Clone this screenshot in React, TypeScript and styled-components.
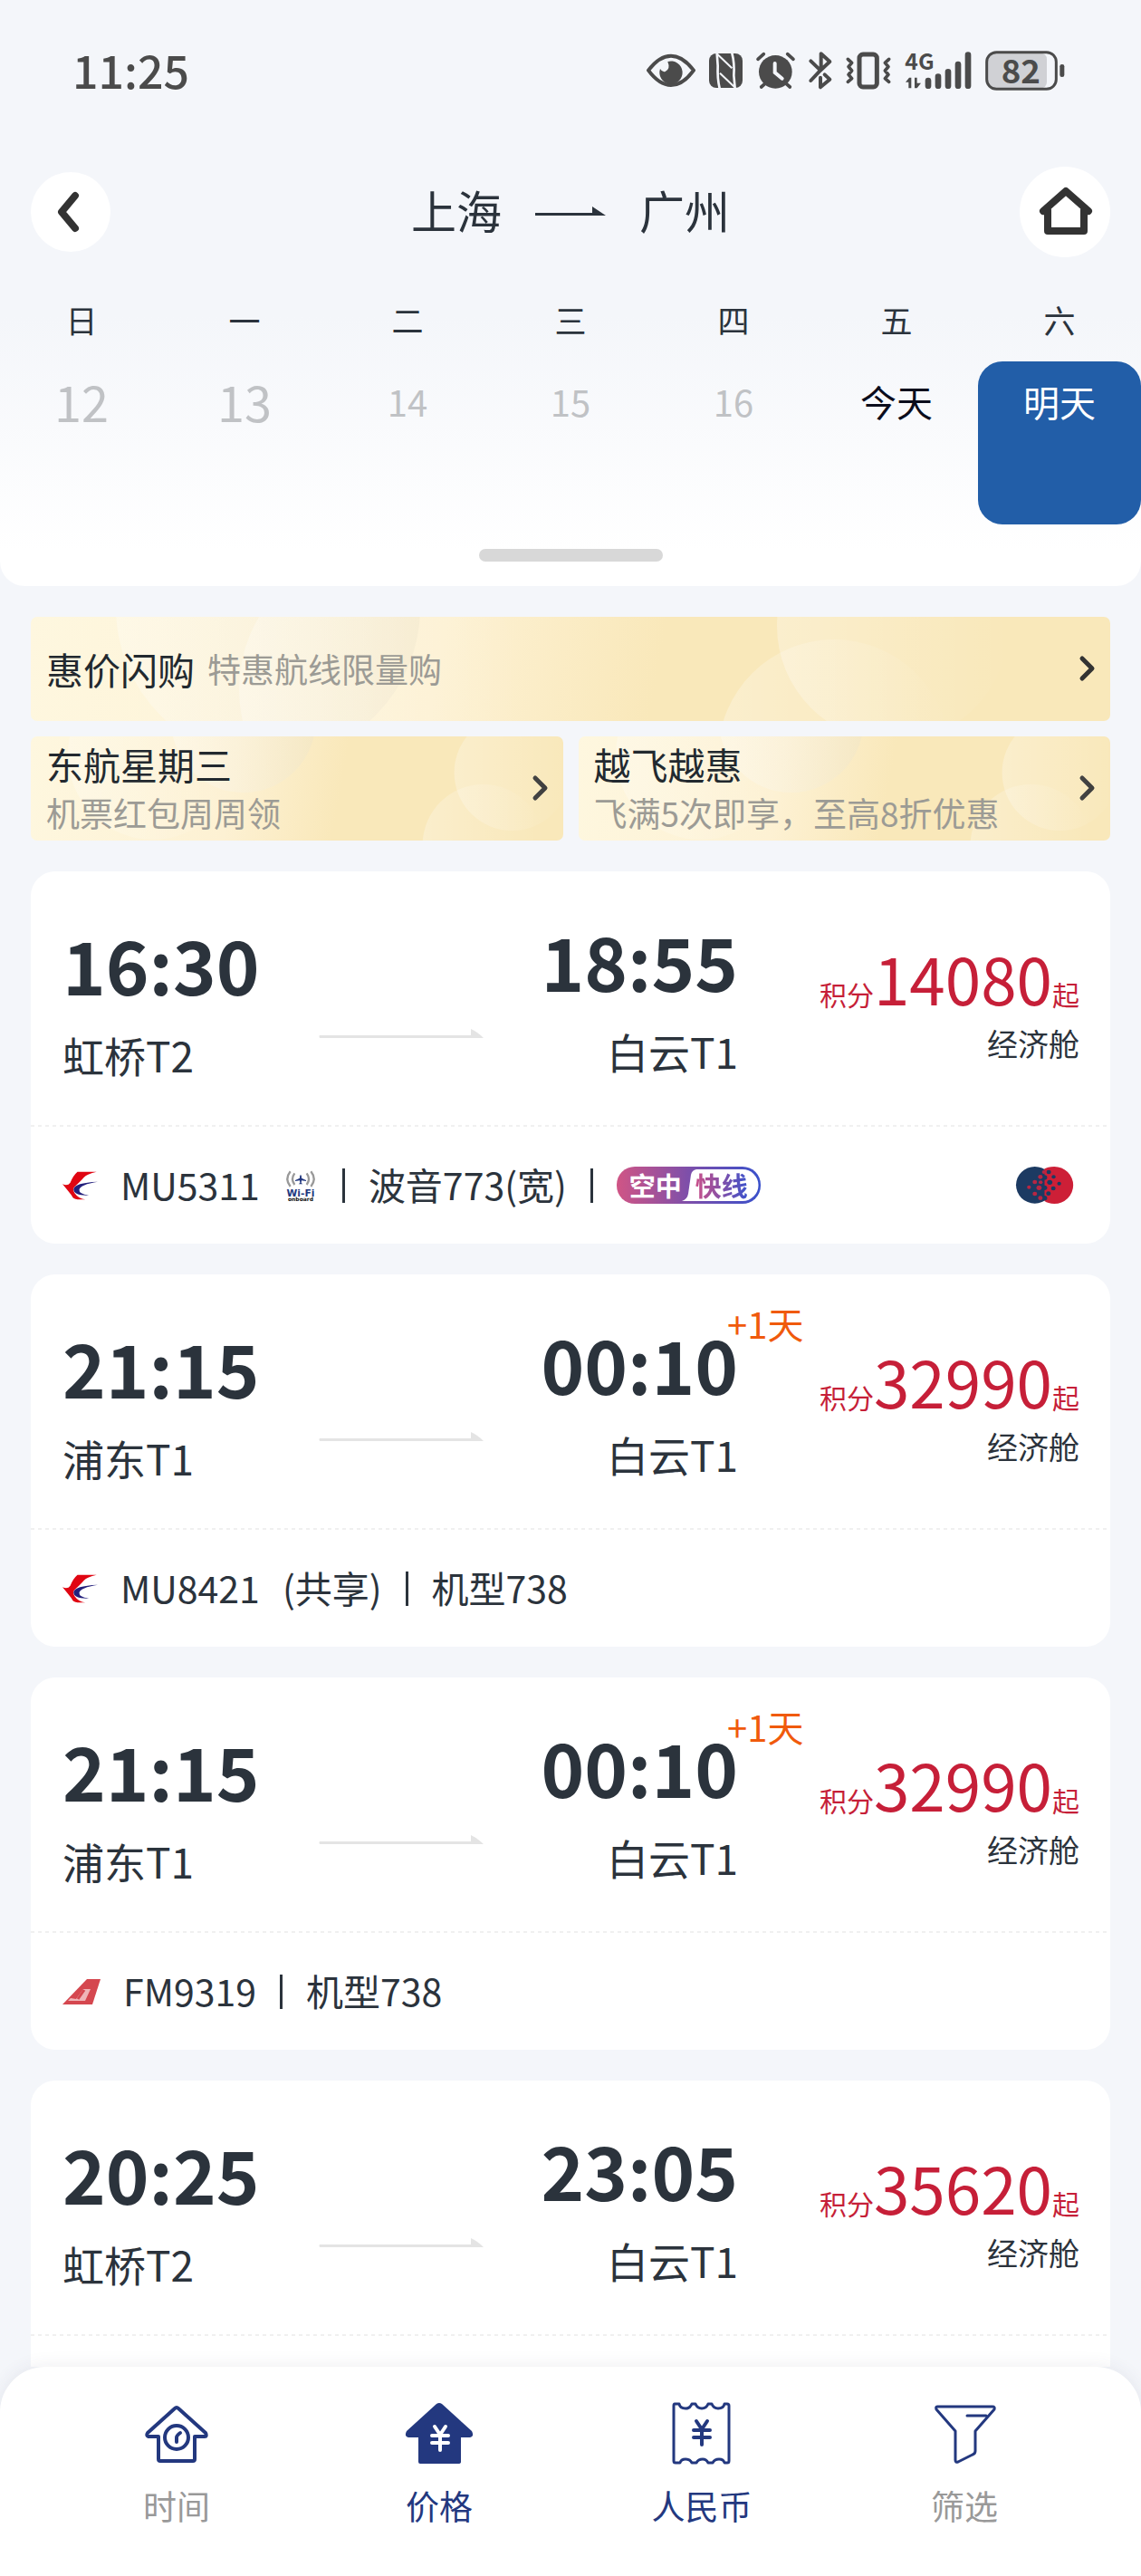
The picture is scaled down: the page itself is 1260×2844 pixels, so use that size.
import React from "react";
import styled, { createGlobalStyle } from "styled-components";

const ink = "#2b333c";
const navy = "#23387f";
const statusInk = "#4b4b4b";
const fontStack = '"Noto Sans CJK SC", "Noto Sans", sans-serif';

const GlobalStyle = createGlobalStyle`
  *, *::before, *::after { box-sizing: border-box; }
  body { margin: 0; background: #f4f6fa; font-family: ${fontStack}; color: ${ink}; }
  button { font: inherit; color: inherit; border: 0; padding: 0; margin: 0; background: none; cursor: pointer; }
  h1, p { margin: 0; font-weight: 400; }
  svg { display: block; flex: none; overflow: visible; }
`;

const Screen = styled.div`
  height: 100vh;
  display: flex;
  flex-direction: column;
  background: #f4f6fa;
  overflow: hidden;
`;

/* ---------- header ---------- */

const Header = styled.header`
  flex: none;
  border-radius: 0 0 27px 27px;
  background: linear-gradient(to bottom, #f4f6fa 0, #f4f6fa 54%, #ffffff 94%);
  padding-bottom: 27px;
`;

const StatusBar = styled.div`
  height: 158px;
  padding: 0 84px 2px 80px;
  display: flex;
  align-items: center;
  justify-content: space-between;
  color: ${statusInk};
`;

const Clock = styled.time`
  padding-bottom: 4px;
  font-size: 50px;
  line-height: 60px;
  font-weight: 500;
`;

const StatusIcons = styled.div`
  display: flex;
  align-items: center;
  gap: 15px;
`;

const TitleBar = styled.div`
  height: 152px;
  padding: 0 34px;
  display: grid;
  grid-template-columns: 1fr auto 1fr;
  align-items: center;
`;

const RoundButton = styled.button<{ $size: number; $end?: boolean }>`
  width: ${(p) => p.$size}px;
  height: ${(p) => p.$size}px;
  border-radius: 50%;
  background: #fff;
  display: flex;
  align-items: center;
  justify-content: center;
  justify-self: ${(p) => (p.$end ? "end" : "start")};
`;

const Route = styled.h1`
  display: flex;
  align-items: center;
  gap: 37px;
  font-size: 50px;
  line-height: 60px;
`;

const City = styled.span`
  padding-bottom: 6px;
`;

const Week = styled.div`
  display: grid;
  grid-template-columns: repeat(7, 1fr);
`;

const Weekday = styled.div`
  height: 89px;
  line-height: 85px;
  text-align: center;
  font-size: 35px;
`;

type DayTone = "past" | "today" | "selected";
const dayColors: Record<DayTone, string> = {
  past: "#c0c2c5",
  today: "#0b0d1c",
  selected: "#ffffff",
};

const Day = styled.button<{ $tone: DayTone; $size: number }>`
  && {
    height: 180px;
    padding-top: 14px;
    display: flex;
    justify-content: center;
    align-items: flex-start;
    border-radius: 27px;
    font-size: ${(p) => p.$size}px;
    line-height: 60px;
    color: ${(p) => dayColors[p.$tone]};
    background: ${(p) => (p.$tone === "selected" ? "#225ea8" : "transparent")};
  }
`;

const Handle = styled.button`
  && {
    display: block;
    width: 203px;
    height: 14px;
    margin: 27px auto 0;
    border-radius: 7px;
    background: #d8d8d8;
  }
`;

/* ---------- list ---------- */

const List = styled.main`
  flex: 1;
  min-height: 0;
  overflow: hidden;
  padding: 34px 34px 0;
  display: flex;
  flex-direction: column;
  gap: 34px;
`;

const Promos = styled.section`
  flex: none;
  display: grid;
  grid-template-columns: 1fr 1fr;
  gap: 17px;
`;

const Promo = styled.a<{ $wide?: boolean }>`
  grid-column: ${(p) => (p.$wide ? "1 / -1" : "auto")};
  height: 115px;
  padding: 0 15px 1px 17px;
  border-radius: 7px;
  overflow: hidden;
  position: relative;
  display: flex;
  align-items: center;
  justify-content: space-between;
  text-decoration: none;
  color: #22292f;
  background: linear-gradient(100deg, #fef7df 0%, #fdf1d3 38%, #f9e8ba 58%, #f9e8ba 100%);
`;

const Bubbles = styled.svg`
  position: absolute;
  inset: 0;
  width: 100%;
  height: 100%;
`;

const PromoText = styled.span<{ $wide?: boolean }>`
  position: relative;
  display: flex;
  flex-direction: ${(p) => (p.$wide ? "row" : "column")};
  align-items: ${(p) => (p.$wide ? "center" : "flex-start")};
  column-gap: 14px;
  line-height: 54px;
`;

const PromoTitle = styled.span`
  font-size: 41px;
`;

const PromoNote = styled.span`
  font-size: 37px;
  color: #9c9b95;
`;

const Card = styled.article`
  flex: none;
  min-height: 411px;
  border-radius: 27px;
  background: #fff;
`;

const CardMain = styled.div`
  position: relative;
  height: 282px;
  padding: 0 34px 0 35px;
  display: grid;
  grid-template-columns: 283fr 182fr 281fr 377fr;
`;

const Rule = styled.svg`
  position: absolute;
  left: 0;
  bottom: 0;
  width: 100%;
  height: 2px;
`;

const Stop = styled.div<{ $arrive?: boolean }>`
  position: relative;
  padding-top: ${(p) => (p.$arrive ? 48 : 52)}px;
  text-align: ${(p) => (p.$arrive ? "right" : "left")};
  line-height: 100px;
  white-space: nowrap;
`;

const StopTime = styled.time`
  display: block;
  font-size: 81px;
  font-weight: 700;
`;

const StopPlace = styled.span`
  display: block;
  font-size: 46px;
`;

const NextDay = styled.span`
  position: absolute;
  top: 30px;
  left: calc(100% - 12px);
  font-size: 40px;
  line-height: 48px;
  color: #f05a0c;
`;

const ArrowCell = styled.div`
  padding-top: 174px;
`;

const Price = styled.div`
  padding-top: 71px;
  text-align: right;
  white-space: nowrap;
`;

const PriceLine = styled.p`
  height: 93px;
  color: #c61f38;
  font-size: 30px;
  line-height: 92px;
`;

const Points = styled.span`
  font-size: 71px;
`;

const Cabin = styled.p`
  font-size: 34px;
  line-height: 52px;
`;

const CardFoot = styled.div`
  height: 129px;
  padding: 0 41px 0 35px;
  display: flex;
  align-items: center;
  justify-content: space-between;
`;

const FlightInfo = styled.div`
  display: flex;
  align-items: center;
  gap: 25px;
  font-size: 41px;
  line-height: 60px;
  white-space: nowrap;
`;

const InfoText = styled.span`
  padding-bottom: 4px;
`;

const Onboard = styled.span`
  margin: 0 4px;
`;

const Bar = styled.span`
  width: 3px;
  height: 38px;
  margin: 0 1px;
  background: ${ink};
`;

const Express = styled.span`
  position: relative;
  width: 159px;
  height: 41px;
  padding: 0 14px;
  display: flex;
  align-items: center;
  justify-content: space-between;
  font-size: 29px;
  line-height: 39px;
  font-weight: 700;
  color: #fff;
`;

const ExpressBack = styled.svg`
  position: absolute;
  inset: 0;
`;

const ExpressWord = styled.span<{ $tinted?: boolean }>`
  position: relative;
  color: ${(p) => (p.$tinted ? "transparent" : "#fff")};
  background: ${(p) => (p.$tinted ? "linear-gradient(90deg, #c9508a, #8350a8 50%, #3b52cc)" : "none")};
  background-clip: ${(p) => (p.$tinted ? "text" : "border-box")};
`;

/* ---------- bottom bar ---------- */

const TabBar = styled.nav`
  flex: none;
  position: relative;
  height: 231px;
  padding: 37px 50px 0;
  border-radius: 50px 50px 0 0;
  background: #fff;
  box-shadow: 0 0 20px rgba(60, 60, 90, 0.09);
  display: grid;
  grid-template-columns: repeat(4, 1fr);
`;

const Tab = styled.button<{ $active?: boolean }>`
  && {
    display: flex;
    flex-direction: column;
    align-items: center;
    justify-content: flex-start;
    gap: 12px;
    font-size: 37px;
    line-height: 60px;
    color: ${(p) => (p.$active ? navy : "#999999")};
  }
`;

/* ---------- drawings ---------- */

const EyeIcon = () => (
  <svg width="54" height="44" viewBox="36 48 162 132" fill={statusInk}>
    <path d="M42 113Q78 65 117 65Q156 65 192 113Q156 162 117 162Q78 162 42 113Z" fill="none" stroke={statusInk} strokeWidth="12" strokeLinejoin="round" />
    <path d="M106 84A38 38 0 1 1 81 108Q88 120 98 117Q116 108 106 84Z" />
  </svg>
);

const NfcIcon = () => (
  <svg width="37" height="44" viewBox="246 48 111 132">
    <rect x="246" y="57" width="111" height="114" rx="24" fill={statusInk} />
    <g fill="none" stroke="#f4f6fa" strokeWidth="8">
      <path d="M281 172Q273 140 275 98L272 56M322 56Q331 90 328 130L332 172" />
      <path d="M274 60L322 106M282 122L330 168" strokeWidth="6" />
    </g>
  </svg>
);

const AlarmIcon = () => (
  <svg width="43" height="44" viewBox="405 48 129 132" fill="none" stroke={statusInk} strokeWidth="11" strokeLinecap="round">
    <circle cx="469" cy="118" r="55" fill={statusInk} stroke="none" />
    <path d="M411 76L430 59M528 76L509 59M422 168L438 154M517 168L501 154" />
    <path d="M467 90V120L491 140" stroke="#f4f6fa" strokeWidth="12" />
  </svg>
);

const BluetoothIcon = () => (
  <svg width="26" height="44" viewBox="581 48 78 132" fill="none" stroke={statusInk} strokeWidth="12" strokeLinejoin="round" strokeLinecap="round">
    <path d="M588 82L620 113L651 84L622 58V108M588 147L620 113M634 127L651 143L620 169V137" />
  </svg>
);

const VibrateIcon = () => (
  <svg width="50" height="44" viewBox="704 48 150 132" fill="none" stroke={statusInk} strokeLinejoin="round" strokeLinecap="round">
    <rect x="749" y="60" width="58" height="108" rx="12" strokeWidth="15" />
    <path d="M711 76L724 88L713 101L724 114L713 127L724 140L711 151M847 76L834 88L845 101L834 114L845 127L834 140L847 151" strokeWidth="11" />
  </svg>
);

const SignalIcon = () => (
  <svg width="74" height="44" viewBox="899 48 222 132" fill={statusInk}>
    <text x="900" y="111" fontFamily={fontStack} fontSize="74" fontWeight="700">4G</text>
    <path d="M902 152L914 137H921V172H912V152ZM932 137H940V155H953L940 172H932Z" />
    <g stroke={statusInk} strokeWidth="20" strokeLinecap="round">
      <path d="M977 147V164M1010 134V164M1043 118V164M1076 93V164M1109 62V164" />
    </g>
  </svg>
);

const BatteryIcon = () => (
  <svg width="88" height="44" viewBox="1166 48 264 132" fill={statusInk}>
    <rect x="1174" y="56" width="196" height="116" rx="20" fill="#d0d1d5" />
    <rect x="1171" y="53" width="230" height="122" rx="32" fill="none" stroke={statusInk} strokeWidth="9" />
    <rect x="1413" y="93" width="15" height="42" rx="7" />
    <text x="1284" y="156" textAnchor="middle" fontFamily={fontStack} fontSize="110" fontWeight="700">82</text>
  </svg>
);

const BackIcon = () => (
  <svg width="32" height="48" viewBox="0 0 32 48" fill="none" stroke="#333" strokeWidth="8" strokeLinecap="round" strokeLinejoin="round">
    <path d="M21 6L6 24L21 42" />
  </svg>
);

const HomeIcon = () => (
  <svg width="60" height="56" viewBox="0 0 60 56" fill="none" stroke="#333" strokeWidth="8" strokeLinecap="round" strokeLinejoin="round">
    <path d="M6 27L31 5L56 27M11 26V49H51V26" />
  </svg>
);

const RouteArrow = () => (
  <svg width="78" height="12" viewBox="0 0 78 12" fill={ink}>
    <path d="M0 7H63V0L78 10H0Z" />
  </svg>
);

const LegArrow = () => (
  <svg width="182" height="11" viewBox="0 0 182 11" fill="#e4e4e4">
    <path d="M1 7H168V0Q175 3 182 10H1Q0 8 1 7Z" />
  </svg>
);

const Chevron = () => (
  <svg width="19" height="28" viewBox="0 0 19 28" fill="none" stroke="#333" strokeWidth="5" strokeLinecap="round" strokeLinejoin="round">
    <path d="M3 3L14 14L3 25" />
  </svg>
);

const EasternLogo = () => (
  <svg width="39" height="32" viewBox="0 0 118 96">
    <path d="M50 2H114Q82 10 72 20Q62 32 42 50Q32 58 40 72Q54 92 76 94H50Q36 94 30 80Q16 62 0 43Q18 50 26 38Q36 14 50 2Z" fill="#e00512" />
    <path d="M118 35Q40 38 37 60Q38 82 88 80Q54 76 56 61Q60 44 118 35Z" fill="#23207c" />
  </svg>
);

const ShanghaiLogo = () => (
  <svg width="42" height="30" viewBox="0 0 42 30">
    <path d="M27 1H42L33 29H0Z" fill="#d5474f" />
    <path d="M23 12H31L25 25H6L9 22L15 23Z" fill="#efb5b8" />
    <path d="M24 13L17 23" stroke="#d5474f" strokeWidth="3" />
  </svg>
);

const WifiIcon = () => (
  <svg width="32" height="34" viewBox="0 0 96 102">
    <g fill="none" stroke="#999" strokeWidth="7">
      <path d="M14 4Q-6 29 14 54M28 10Q14 29 28 48M82 4Q102 29 82 54M68 10Q82 29 68 48" />
    </g>
    <path d="M48 14Q52 18 51 26L66 33V36L51 34L50 42L55 46H41L46 42L45 34L30 36V33L45 26Q44 18 48 14Z" fill="#23387f" />
    <text x="48" y="88" textAnchor="middle" fontFamily='"DejaVu Sans", sans-serif' fontSize="32" fontWeight="700" fill="#23387f">Wi-Fi</text>
    <text x="48" y="101" textAnchor="middle" fontFamily='"DejaVu Sans", sans-serif' fontSize="18" fontWeight="700" fill="#111">onboard</text>
  </svg>
);

const blueDots = [[101, 18, 7], [116, 34, 6], [104, 52, 8], [133, 56, 6], [115, 72, 7], [100, 89, 7], [88, 36, 8], [88, 70, 8], [88, 104, 8]];
const redDots = [[75, 34, 7], [58, 51, 7], [40, 68, 6], [71, 70, 8], [58, 90, 7], [75, 104, 7], [76, 52, 6], [86, 18, 6]];

const AllianceIcon = () => (
  <svg width="63" height="41" viewBox="0 0 176 123" preserveAspectRatio="none">
    <ellipse cx="58" cy="61" rx="58" ry="61" fill="#1c3a62" />
    <path d="M84 10Q98 0 118 0A58 61 0 0 1 118 123Q98 122 88 114V10Z" fill="#cd1f37" />
    {blueDots.map(([x, y, r]) => <circle key={`${x}-${y}`} cx={x} cy={y} r={r} fill="#1c3a62" />)}
    {redDots.map(([x, y, r]) => <circle key={`${x}-${y}`} cx={x} cy={y} r={r} fill="#b72643" />)}
  </svg>
);

const YenStroke = ({ color }: { color: string }) => (
  <path d="M-6 -12L0 -3L6 -12M0 -3V14M-9 -2H9M-9 6H9" fill="none" stroke={color} strokeWidth="4" strokeLinecap="round" strokeLinejoin="round" />
);

const TimeTabIcon = () => (
  <svg width="76" height="74" viewBox="0 0 76 74" fill="none" stroke={navy} strokeWidth="4" strokeLinejoin="round" strokeLinecap="round">
    <path d="M36 9Q38 7 40 9L70 36Q72 40 69 40H58V65Q58 67 56 67H20Q18 67 18 65V40H7Q4 39 6 36Z" />
    <circle cx="38" cy="41" r="13" />
    <path d="M38 46V41Q38 39 42 36" />
  </svg>
);

const PriceTabIcon = () => (
  <svg width="76" height="74" viewBox="0 0 76 74">
    <path d="M35 4Q38 2 41 4L74 34Q77 40 72 41H62V68Q62 70 59 70H17Q15 70 15 68V41H4Q-1 40 2 34Z" fill={navy} />
    <g transform="translate(39 41)"><YenStroke color="#fff" /></g>
  </svg>
);

const CurrencyTabIcon = () => (
  <svg width="76" height="74" viewBox="0 0 76 74" fill="none" stroke={navy} strokeWidth="3" strokeLinejoin="round">
    <path d="M8 4H13Q14 9 20 9Q25 9 27 4H31Q33 9 38 9Q43 9 45 4H49Q51 9 56 9Q62 9 63 4H66Q68 4 68 6V67Q68 69 66 69H63Q62 65 57 65Q52 65 50 69H45Q43 65 39 65Q34 65 32 69H27Q25 65 20 65Q15 65 14 69H9Q7 69 7 67V6Q7 4 8 4Z" />
    <g transform="translate(38 35)"><YenStroke color={navy} /></g>
  </svg>
);

const FilterTabIcon = () => (
  <svg width="76" height="74" viewBox="0 0 76 74" fill="none" stroke={navy} strokeWidth="3" strokeLinejoin="round" strokeLinecap="round">
    <path d="M8 7H69Q72 7 71 10L50 34V56Q50 59 47 60L31 68Q28 69 28 66V34L7 10Q6 7 8 7ZM41 17H62" />
  </svg>
);

/* ---------- parts ---------- */

const weekdays = ["日", "一", "二", "三", "四", "五", "六"];
const days: { label: string; tone: DayTone; size: number }[] = [
  { label: "12", tone: "past", size: 54 },
  { label: "13", tone: "past", size: 54 },
  { label: "14", tone: "past", size: 40 },
  { label: "15", tone: "past", size: 40 },
  { label: "16", tone: "past", size: 40 },
  { label: "今天", tone: "today", size: 40 },
  { label: "明天", tone: "selected", size: 40 },
];

const PromoLink = ({ title, note, wide }: { title: string; note: string; wide?: boolean }) => (
  <Promo href="#" $wide={wide}>
    {wide ? (
      <Bubbles viewBox="0 0 1192 115" preserveAspectRatio="none">
        <defs>
          <linearGradient id="wideA"><stop offset="0" stopColor="#fff" stopOpacity="0.4" /><stop offset="1" stopColor="#eee4c8" stopOpacity="0.7" /></linearGradient>
          <linearGradient id="wideB"><stop offset="0" stopColor="#fff" stopOpacity="0.28" /><stop offset="1" stopColor="#fff" stopOpacity="0" /></linearGradient>
        </defs>
        <circle cx="262" cy="-10" r="168" fill="url(#wideA)" opacity="0.7" />
        <circle cx="386" cy="80" r="156" fill="url(#wideB)" />
        <circle cx="952" cy="10" r="128" fill="url(#wideB)" />
        <circle cx="887" cy="153" r="128" fill="url(#wideB)" />
      </Bubbles>
    ) : (
      <Bubbles viewBox="0 0 588 115" preserveAspectRatio="none">
        <defs>
          <linearGradient id="halfA"><stop offset="0" stopColor="#fff" stopOpacity="0.4" /><stop offset="1" stopColor="#eee4c8" stopOpacity="0.6" /></linearGradient>
          <linearGradient id="halfB"><stop offset="0" stopColor="#fff" stopOpacity="0.26" /><stop offset="1" stopColor="#fff" stopOpacity="0" /></linearGradient>
        </defs>
        <circle cx="135" cy="20" r="94" fill="url(#halfB)" />
        <circle cx="235" cy="-18" r="80" fill="url(#halfA)" opacity="0.7" />
        <circle cx="532" cy="40" r="64" fill="url(#halfB)" />
        <circle cx="500" cy="120" r="67" fill="url(#halfB)" />
      </Bubbles>
    )}
    <PromoText $wide={wide}>
      <PromoTitle>{title}</PromoTitle>
      <PromoNote>{note}</PromoNote>
    </PromoText>
    <Chevron />
  </Promo>
);

const ExpressBadge = () => (
  <Express>
    <ExpressBack width="159" height="41" viewBox="0 0 159 41">
      <defs>
        <linearGradient id="express"><stop offset="0" stopColor="#d05585" /><stop offset="0.5" stopColor="#7d4faa" /><stop offset="1" stopColor="#3950cb" /></linearGradient>
      </defs>
      <rect width="159" height="41" rx="20" fill="url(#express)" />
      <path d="M88 3H139A17 17 0 0 1 139 38H72Q78 36 79 30L82 9Q83 4 88 3Z" fill="#fff" />
    </ExpressBack>
    <ExpressWord>空中</ExpressWord>
    <ExpressWord $tinted>快线</ExpressWord>
  </Express>
);

type Flight = {
  depart: string;
  from: string;
  arrive: string;
  to: string;
  nextDay?: boolean;
  points: string;
  foot?: React.ReactNode;
};

const flights: Flight[] = [
  {
    depart: "16:30", from: "虹桥T2", arrive: "18:55", to: "白云T1", points: "14080",
    foot: (
      <>
        <FlightInfo>
          <EasternLogo />
          <InfoText>MU5311</InfoText>
          <Onboard><WifiIcon /></Onboard>
          <Bar />
          <InfoText>波音773(宽)</InfoText>
          <Bar />
          <ExpressBadge />
        </FlightInfo>
        <AllianceIcon />
      </>
    ),
  },
  {
    depart: "21:15", from: "浦东T1", arrive: "00:10", to: "白云T1", nextDay: true, points: "32990",
    foot: (
      <FlightInfo>
        <EasternLogo />
        <InfoText>MU8421</InfoText>
        <InfoText>(共享)</InfoText>
        <Bar />
        <InfoText>机型738</InfoText>
      </FlightInfo>
    ),
  },
  {
    depart: "21:15", from: "浦东T1", arrive: "00:10", to: "白云T1", nextDay: true, points: "32990",
    foot: (
      <FlightInfo>
        <ShanghaiLogo />
        <InfoText>FM9319</InfoText>
        <Bar />
        <InfoText>机型738</InfoText>
      </FlightInfo>
    ),
  },
  { depart: "20:25", from: "虹桥T2", arrive: "23:05", to: "白云T1", points: "35620" },
];

const FlightCard = ({ flight }: { flight: Flight }) => (
  <Card>
    <CardMain>
      <Stop>
        <StopTime>{flight.depart}</StopTime>
        <StopPlace>{flight.from}</StopPlace>
      </Stop>
      <ArrowCell><LegArrow /></ArrowCell>
      <Stop $arrive>
        <StopTime>{flight.arrive}</StopTime>
        <StopPlace>{flight.to}</StopPlace>
        {flight.nextDay && <NextDay>+1天</NextDay>}
      </Stop>
      <Price>
        <PriceLine>积分<Points>{flight.points}</Points>起</PriceLine>
        <Cabin>经济舱</Cabin>
      </Price>
      <Rule><line x1="0" y1="1" x2="100%" y2="1" stroke="#f0f0f0" strokeWidth="2" strokeDasharray="4 4" /></Rule>
    </CardMain>
    {flight.foot && <CardFoot>{flight.foot}</CardFoot>}
  </Card>
);

export default function App() {
  return (
    <Screen>
      <GlobalStyle />
      <Header>
        <StatusBar>
          <Clock>11:25</Clock>
          <StatusIcons>
            <EyeIcon />
            <NfcIcon />
            <AlarmIcon />
            <BluetoothIcon />
            <VibrateIcon />
            <SignalIcon />
            <BatteryIcon />
          </StatusIcons>
        </StatusBar>
        <TitleBar>
          <RoundButton type="button" aria-label="返回" $size={88}><BackIcon /></RoundButton>
          <Route>
            <City>上海</City>
            <RouteArrow />
            <City>广州</City>
          </Route>
          <RoundButton type="button" aria-label="首页" $size={100} $end><HomeIcon /></RoundButton>
        </TitleBar>
        <Week>
          {weekdays.map((d) => <Weekday key={d}>{d}</Weekday>)}
          {days.map((d) => (
            <Day key={d.label} type="button" $tone={d.tone} $size={d.size}>{d.label}</Day>
          ))}
        </Week>
        <Handle type="button" aria-label="展开日历" />
      </Header>
      <List>
        <Promos>
          <PromoLink wide title="惠价闪购" note="特惠航线限量购" />
          <PromoLink title="东航星期三" note="机票红包周周领" />
          <PromoLink title="越飞越惠" note="飞满5次即享，至高8折优惠" />
        </Promos>
        {flights.map((f, i) => <FlightCard key={i} flight={f} />)}
      </List>
      <TabBar>
        <Tab type="button"><TimeTabIcon />时间</Tab>
        <Tab type="button" $active><PriceTabIcon />价格</Tab>
        <Tab type="button" $active><CurrencyTabIcon />人民币</Tab>
        <Tab type="button"><FilterTabIcon />筛选</Tab>
      </TabBar>
    </Screen>
  );
}
